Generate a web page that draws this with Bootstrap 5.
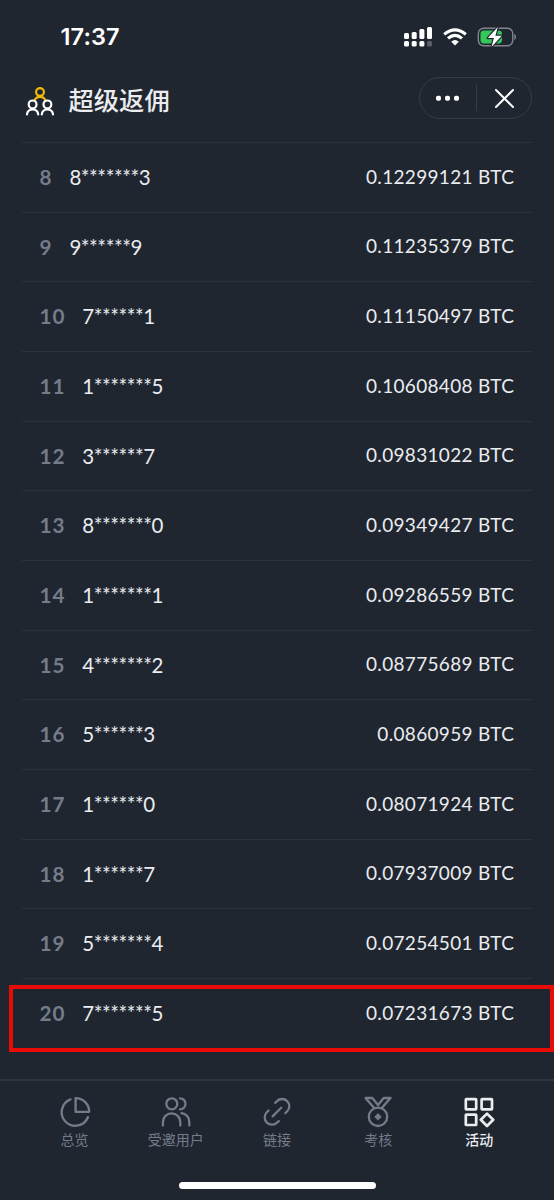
<!DOCTYPE html>
<html lang="zh-CN">
<head>
<meta charset="utf-8">
<meta name="viewport" content="width=device-width, initial-scale=1">
<title>超级返佣</title>
<link href="https://cdn.jsdelivr.net/npm/bootstrap@5.3.0/dist/css/bootstrap.min.css" rel="stylesheet">
<style>
body{background:#202630;color:#eaecef;font-family:Lato,"Noto Sans CJK SC",sans-serif;line-height:1}
.screen{height:1200px;overflow:hidden}
.statusbar{height:74px;padding-left:60.5px;padding-right:37px}
.clock{font:600 23.5px/1 Inter,sans-serif;letter-spacing:.1px;color:#fff}
.status-icons{gap:10px}
.titlebar{height:48px;padding-left:25px;padding-right:22px}
.app-icon{margin-top:5px}
.app-title{font:500 25.3px/1 "Noto Sans CJK SC",sans-serif;margin-left:13.5px;padding-top:3px}
.capsule{width:113px;height:42px;border:1px solid #363c46}
.ranking{margin:20px 22px 0;padding:0;height:937px}
.entry{height:69.67px;border-top:1px solid #2b323c;padding:0 18px 0 17.5px}
.rank-no{font-weight:700;font-size:20.7px;color:#747c8a;letter-spacing:.9px;margin-right:17px}
.user-id{font-size:20.5px;letter-spacing:-.45px}
.amount{font-size:19px;letter-spacing:.32px;margin-right:-.3px;padding-bottom:2px}
.marked{position:relative}
.marked::after{content:"";position:absolute;left:-13px;right:-22px;top:6px;height:67px;border:4px solid #e90b08}
.tabs{height:121px;border-top:2px solid #303741;padding:15px 24px 0}
.tab-item{width:101.2px;color:#747c8a;font:400 14px/1 "Noto Sans CJK SC",sans-serif;gap:3.5px}
.tab-item.on{color:#eaecef;font-weight:500}
.home-bar{position:absolute;left:179px;top:1182px;width:197px;height:7px;background:#fff}
svg{display:block;flex:none}
</style>
</head>
<body>
<div class="screen d-flex flex-column position-relative">
  <header>
    <div class="statusbar d-flex align-items-center justify-content-between">
      <div class="clock">17:37</div>
      <div class="status-icons d-flex align-items-center">
        <svg width="29" height="20" viewBox="0 0 29 20" fill="#fff"><rect x="0" y="6" width="5" height="6" rx="1.5"/><rect x="7.7" y="5" width="5" height="7" rx="1.5"/><rect x="15.4" y="2" width="5" height="10" rx="1.5"/><rect x="23" y="0" width="5" height="12" rx="1.5"/><rect x="0" y="14" width="5" height="5.5" rx="1.5"/><rect x="7.7" y="14" width="5" height="5.5" rx="1.5"/><rect x="15.4" y="14" width="5" height="5.5" rx="1.5"/><rect x="23" y="14" width="5" height="5.5" rx="1.5" fill="#5a606a"/></svg>
        <svg width="24" height="18" viewBox="0 0 24 18" fill="none" stroke="#fff" stroke-width="3.2"><path d="M1.2 6.4Q12-2.8 22.8 6.4"/><path d="M5 10.4Q12 4.4 19 10.4"/><path d="M8.2 13.7Q12 10.4 15.8 13.7L12 17.6Z" fill="#fff" stroke="none"/></svg>
        <svg width="40" height="22" viewBox="0 0 40 22"><rect x="1.3" y="2.2" width="34.5" height="17.6" rx="5.5" fill="none" stroke="#80858c" stroke-width="1.4"/><path d="M37.3 8v6q1.7-.6 1.7-3t-1.7-3" fill="#80858c"/><rect x="3.5" y="4.5" width="21.5" height="13" rx="3.4" fill="#34c759"/><path d="M20.8 1L10.8 12h6.1l-2.4 9L24.8 9.7h-6.4Z" fill="#fff" stroke="#202630" stroke-width="2.4" paint-order="stroke" stroke-linejoin="round"/></svg>
      </div>
    </div>
    <div class="titlebar d-flex align-items-center">
      <svg class="app-icon" width="30" height="30" viewBox="0 0 30 30" fill="none" stroke-width="2.2" stroke-linecap="round"><g stroke="#f0b90b"><circle cx="15" cy="6" r="3.9"/><path d="M9.6 14.8Q10.5 10.9 15 10.9t5.4 3.9"/></g><g stroke="#fff"><circle cx="7.6" cy="18.4" r="3.9"/><circle cx="22.4" cy="18.4" r="3.9"/><path d="M2 28.3Q2.5 23.5 7.6 23.5t5.6 4.8M16.8 28.3q.5-4.8 5.6-4.8t5.6 4.8"/></g></svg>
      <h1 class="app-title mb-0">超级返佣</h1>
      <div class="capsule rounded-pill ms-auto d-flex align-items-center">
        <svg width="111" height="40" viewBox="0 0 111 40"><g fill="#fff"><rect x="16" y="17.7" width="5" height="5" rx="1.8"/><rect x="25" y="17.7" width="5" height="5" rx="1.8"/><rect x="34" y="17.7" width="5" height="5" rx="1.8"/></g><path d="M56.5 7v26" stroke="#363c46"/><path d="M76 12l17 17M93 12l-17 17" stroke="#fff" stroke-width="2" stroke-linecap="round"/></svg>
      </div>
    </div>
  </header>
  <main class="ranking">
    <div class="entry d-flex align-items-center"><span class="rank-no">8</span><span class="user-id">8*******3</span><span class="amount ms-auto">0.12299121 BTC</span></div>
    <div class="entry d-flex align-items-center"><span class="rank-no">9</span><span class="user-id">9******9</span><span class="amount ms-auto">0.11235379 BTC</span></div>
    <div class="entry d-flex align-items-center"><span class="rank-no">10</span><span class="user-id">7******1</span><span class="amount ms-auto">0.11150497 BTC</span></div>
    <div class="entry d-flex align-items-center"><span class="rank-no">11</span><span class="user-id">1*******5</span><span class="amount ms-auto">0.10608408 BTC</span></div>
    <div class="entry d-flex align-items-center"><span class="rank-no">12</span><span class="user-id">3******7</span><span class="amount ms-auto">0.09831022 BTC</span></div>
    <div class="entry d-flex align-items-center"><span class="rank-no">13</span><span class="user-id">8*******0</span><span class="amount ms-auto">0.09349427 BTC</span></div>
    <div class="entry d-flex align-items-center"><span class="rank-no">14</span><span class="user-id">1*******1</span><span class="amount ms-auto">0.09286559 BTC</span></div>
    <div class="entry d-flex align-items-center"><span class="rank-no">15</span><span class="user-id">4*******2</span><span class="amount ms-auto">0.08775689 BTC</span></div>
    <div class="entry d-flex align-items-center"><span class="rank-no">16</span><span class="user-id">5******3</span><span class="amount ms-auto">0.0860959 BTC</span></div>
    <div class="entry d-flex align-items-center"><span class="rank-no">17</span><span class="user-id">1******0</span><span class="amount ms-auto">0.08071924 BTC</span></div>
    <div class="entry d-flex align-items-center"><span class="rank-no">18</span><span class="user-id">1******7</span><span class="amount ms-auto">0.07937009 BTC</span></div>
    <div class="entry d-flex align-items-center"><span class="rank-no">19</span><span class="user-id">5*******4</span><span class="amount ms-auto">0.07254501 BTC</span></div>
    <div class="entry marked d-flex align-items-center"><span class="rank-no">20</span><span class="user-id">7*******5</span><span class="amount ms-auto">0.07231673 BTC</span></div>
  </main>
  <nav class="tabs d-flex">
    <div class="tab-item d-flex flex-column align-items-center">
      <svg width="32" height="32" viewBox="0 0 32 32" fill="none" stroke="currentColor" stroke-width="2.3" stroke-linecap="round" stroke-linejoin="round"><path d="M11.5 3.4A13.6 13.6 0 1 0 29 21"/><path d="M16.6 2.2v13.6H30.2A13.6 13.6 0 0 0 16.6 2.2Z"/></svg><span>总览</span></div>
    <div class="tab-item d-flex flex-column align-items-center">
      <svg width="32" height="32" viewBox="0 0 32 32" fill="none" stroke="currentColor" stroke-width="2.3" stroke-linecap="round"><circle cx="11.8" cy="7.8" r="5.5"/><path d="M2.9 29.5V26a8.7 8.7 0 0 1 17.4 0v3.5M20 2.3a5.5 5.5 0 0 1 0 11M21.5 17.2A8.6 8.6 0 0 1 29.3 26v3.5"/></svg><span>受邀用户</span></div>
    <div class="tab-item d-flex flex-column align-items-center">
      <svg width="32" height="32" viewBox="0 0 32 32" fill="none" stroke="currentColor" stroke-width="2.3" stroke-linecap="round"><path d="M14.2 6.9l1.8-1.8A7.2 7.2 0 0 1 26.2 15.3l-1.8 1.8M17.8 25.1l-1.6 1.4A7.2 7.2 0 0 1 5.8 16.3l1.8-1.8M11.6 20.4l8.6-8.6"/></svg><span>链接</span></div>
    <div class="tab-item d-flex flex-column align-items-center">
      <svg width="32" height="32" viewBox="0 0 32 32" fill="none" stroke="currentColor" stroke-width="2.3" stroke-linecap="round" stroke-linejoin="round"><circle cx="16" cy="20.8" r="9.2"/><path d="M12 11.8L3.5 2h6.8L16 9l5.7-7h6.8L20 11.8"/><path d="M16 17.9l2.9 2.9-2.9 2.9-2.9-2.9Z" fill="currentColor" stroke-width="1.2"/></svg><span>考核</span></div>
    <div class="tab-item on d-flex flex-column align-items-center">
      <svg width="32" height="32" viewBox="0 0 32 32" fill="none" stroke="currentColor" stroke-width="2.7" stroke-linejoin="round"><rect x="2.8" y="3.1" width="10.4" height="10.2" rx=".6"/><rect x="18.6" y="3.1" width="10.4" height="10.2" rx=".6"/><rect x="2.8" y="18.6" width="10.4" height="10.4" rx=".6"/><path d="M24 17.6l6.2 6.2-6.2 6.2-6.2-6.2Z"/></svg><span>活动</span></div>
  </nav>
  <div class="home-bar rounded-pill"></div>
</div>
<script src="https://cdn.jsdelivr.net/npm/bootstrap@5.3.0/dist/js/bootstrap.bundle.min.js"></script>
</body>
</html>
